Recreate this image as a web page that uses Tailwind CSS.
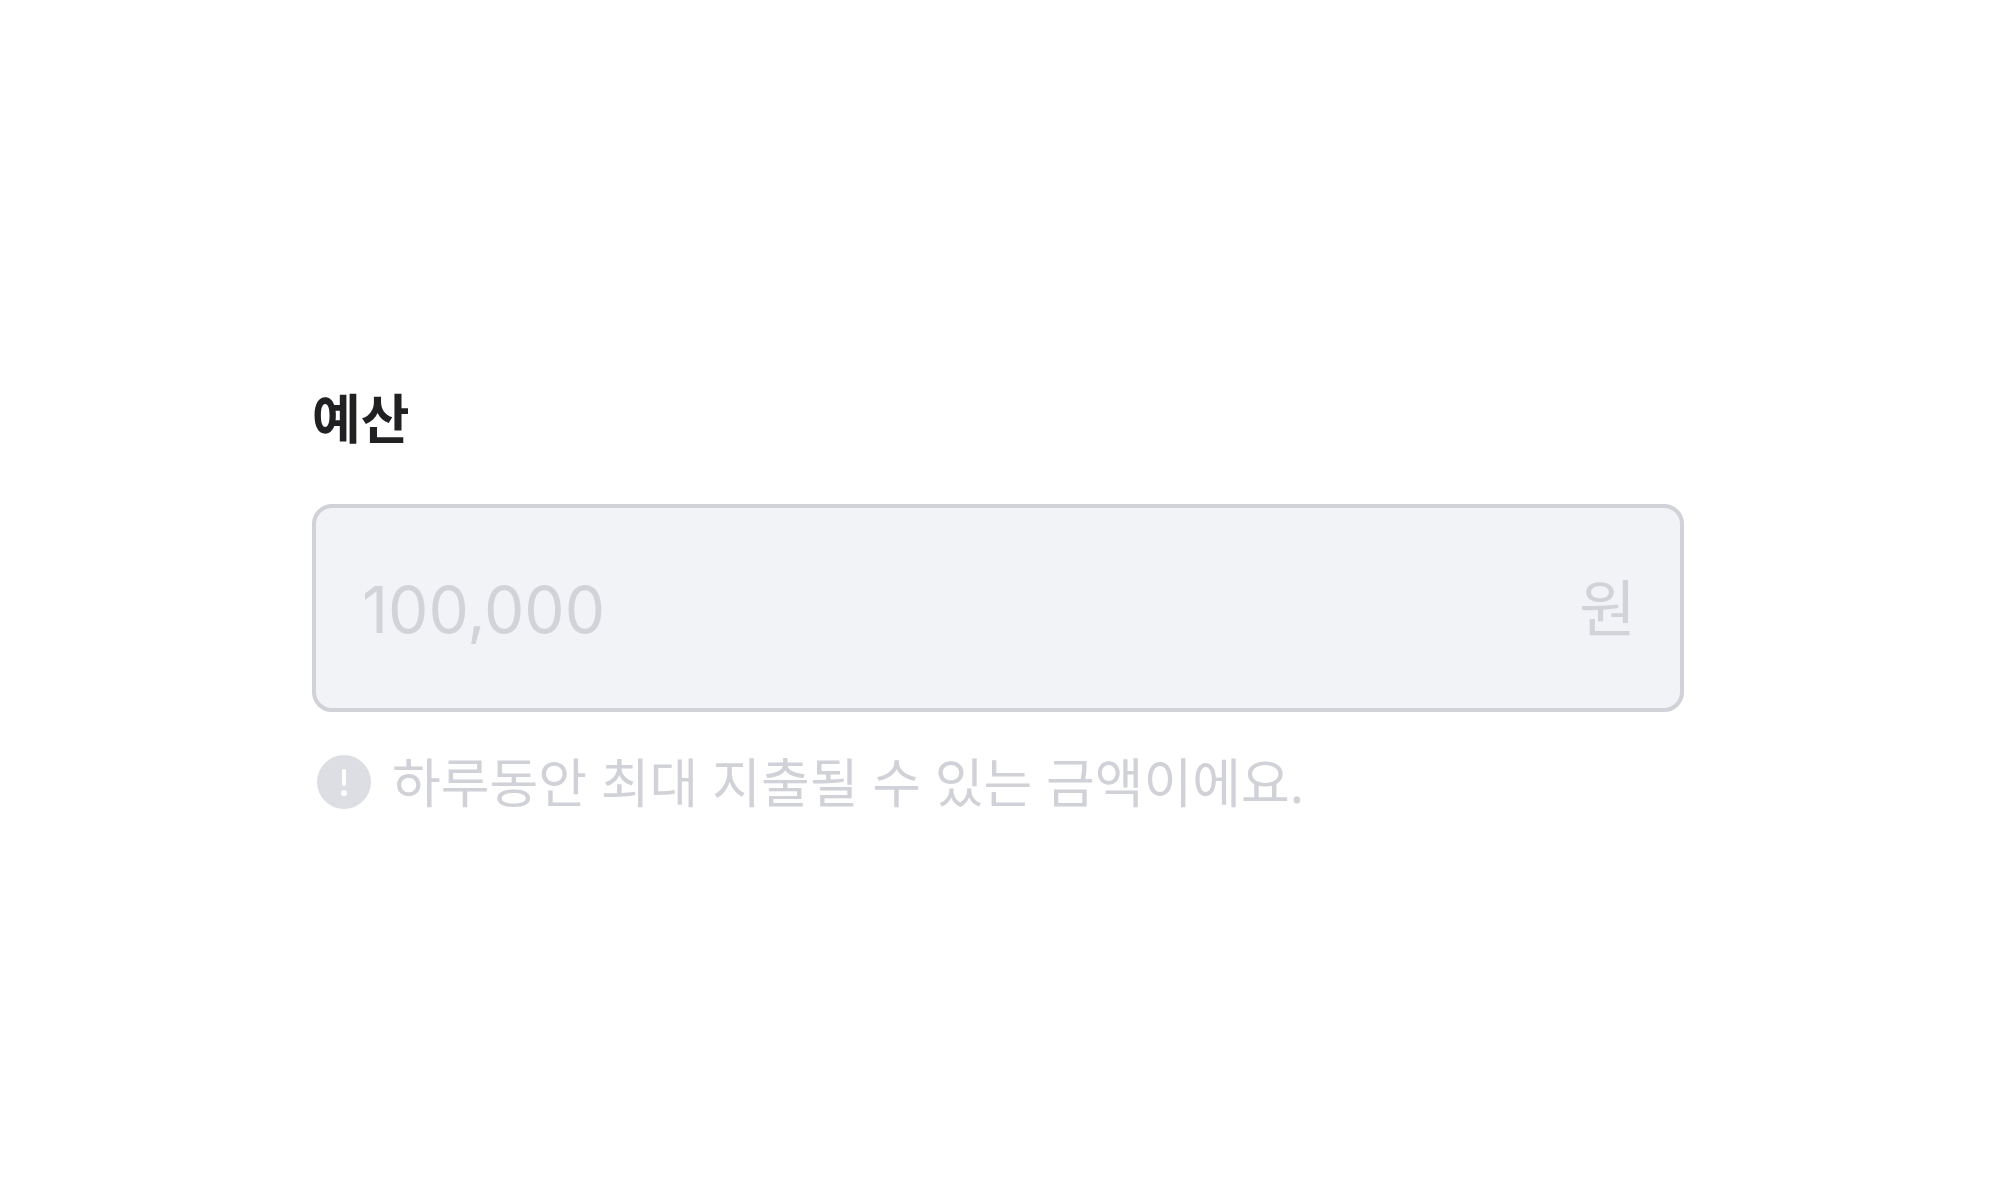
<!DOCTYPE html>
<html lang="ko">
<head>
<meta charset="utf-8">
<title>예산</title>
<script src="https://cdn.jsdelivr.net/npm/@tailwindcss/browser@4"></script>
</head>
<body class="bg-white font-['Inter','Noto_Sans_CJK_KR',sans-serif]">
<main class="flex min-h-screen items-center justify-center pt-1 pr-[316px] pl-[312px]">
  <div class="w-full">
    <label for="budget" class="block pb-12 text-[53px] leading-[72px] font-bold text-[#212124]">예산</label>
    <div class="flex items-center rounded-[20px] border-4 border-[#d1d2d8] bg-[#f1f3f7] pt-[62px] pr-11 pb-[58px] pl-[46px] text-[64px] leading-[80px] text-[#d1d3d8]">
      <input id="budget" type="text" disabled placeholder="100,000" aria-describedby="hint" class="h-20 min-w-0 flex-1 bg-transparent placeholder:text-[#d1d3d8]">
      <span class="text-[62px]">원</span>
    </div>
    <div class="flex items-start gap-4 pt-[34px]">
      <svg class="mt-1 size-16 shrink-0" viewBox="0 0 64 64" aria-hidden="true"><circle cx="32" cy="32" r="27" fill="#dcdee3"/><rect x="30" y="19" width="4" height="17" rx="2" fill="#fff"/><circle cx="32" cy="43" r="3" fill="#fff"/></svg>
      <p id="hint" class="font-['Noto_Sans','Noto_Sans_CJK_KR',sans-serif] text-[53px] leading-[74px] text-[#d1d2d8]">하루동안 최대 지출될 수 있는 금액이에요.</p>
    </div>
  </div>
</main>
</body>
</html>
